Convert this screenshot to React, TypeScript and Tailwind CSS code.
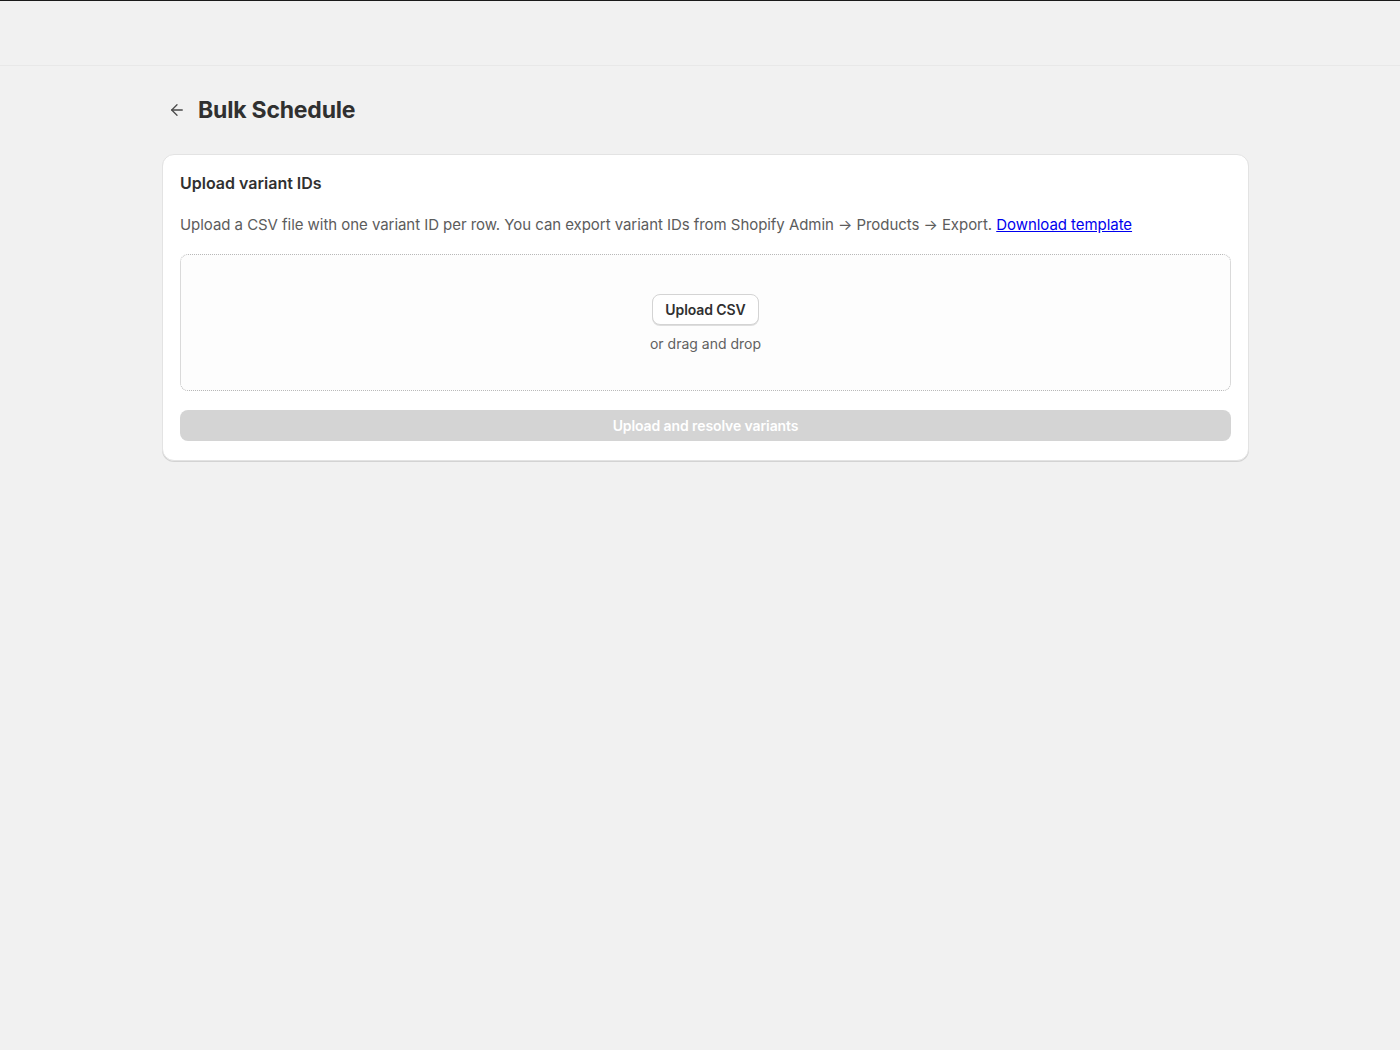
import { ArrowLeft } from "lucide-react"

export default function App() {
  return (
    <div className="min-h-screen bg-[#f1f1f1] text-[#303030]" style={{ fontFamily: "Inter, 'Noto Sans', sans-serif" }}>
      <div className="h-[1px] bg-[#1a1a1a]" />
      <div className="h-[65px] border-b border-[#e8e8e8] bg-[#f1f1f1]" />

      <div className="pl-[162px] pr-[151px]">
        <div className="flex items-center gap-[12px] pt-[28px] pb-[28px] pl-[6px]">
          <ArrowLeft className="w-[18px] h-[18px] text-[#4a4a4a]" strokeWidth={1.75} />
          <h1 className="text-[23px] font-bold leading-[32px] tracking-[-0.2px]">Bulk Schedule</h1>
        </div>

        <div className="bg-white rounded-[12px] border border-[#e3e3e3] shadow-[0_1px_0_0_rgba(0,0,0,0.12)] p-[17px] pb-[19px]">
          <h2 className="text-[16px] font-semibold leading-[24px] -mt-[1px]">Upload variant IDs</h2>
          <p className="text-[15px] leading-[24px] text-[#5c5c5c] mt-[18px] tracking-[-0.05px]">
            Upload a CSV file with one variant ID per row. You can export variant IDs from Shopify Admin → Products → Export.{" "}
            <a href="#" className="text-[#0000ee] underline">Download template</a>
          </p>

          <div className="mt-[17px] h-[137px] rounded-[8px] border border-dotted border-[#b8b8b8] bg-[#fdfdfd] flex flex-col items-center justify-center">
            <button className="h-[31px] px-[12px] rounded-[8px] bg-white border border-[#d4d4d4] shadow-[0_1px_0_0_rgba(0,0,0,0.12)] text-[14px] font-semibold text-[#303030] tracking-[-0.1px] mt-[2px]">
              Upload CSV
            </button>
            <span className="text-[14px] leading-[20px] text-[#616161] mt-[9px]">or drag and drop</span>
          </div>

          <button className="mt-[19px] w-full h-[31px] rounded-[8px] bg-[#d4d4d4] text-white text-[14px] font-semibold tracking-[-0.1px]">
            Upload and resolve variants
          </button>
        </div>
      </div>
    </div>
  )
}
